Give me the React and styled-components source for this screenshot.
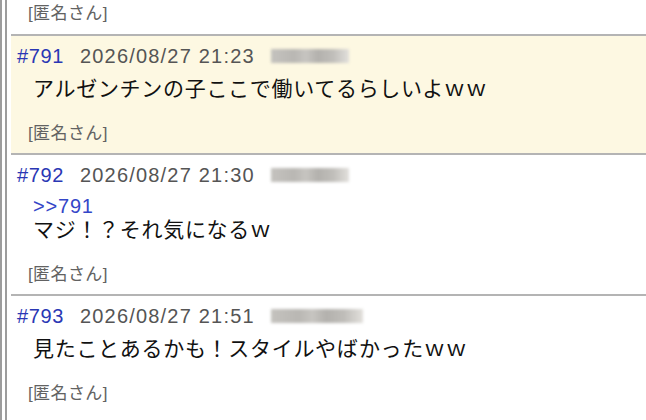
import React from "react";
import styled, { createGlobalStyle } from "styled-components";

const GlobalStyle = createGlobalStyle`
  html, body {
    margin: 0;
    padding: 0;
    background: #ffffff;
  }
  body {
    font-family: "Liberation Sans", "Noto Sans CJK JP", sans-serif;
  }
`;

const Frame = styled.div`
  min-height: 100vh;
  border-left: 7px double #9c9c9c;
  padding-left: 4px;
  box-sizing: border-box;
`;

const Post = styled.div`
  border-top: ${(p) => (p.$partial ? "none" : "2px solid #b4b4b4")};
  background: ${(p) => (p.$highlight ? "#fdf8e2" : "#ffffff")};
  padding: ${(p) => (p.$partial ? "2px 0 8px" : "8px 0 7px")};
`;

const Header = styled.div`
  display: flex;
  align-items: center;
  gap: 16px;
  padding-left: 6px;
  height: 24px;
  font-family: "Liberation Sans", sans-serif;
  font-size: 20px;
`;

const Num = styled.span`
  color: #2a37b4;
  letter-spacing: 0.6px;
`;

const Date = styled.span`
  color: #555555;
  letter-spacing: 1.2px;
`;

const BlurId = styled.span`
  display: inline-block;
  width: ${(p) => p.$w}px;
  height: 14px;
  background: linear-gradient(
    90deg,
    #c4c2be 0%,
    #b9b7b3 30%,
    #c7c5c1 45%,
    #b3b1ad 60%,
    #c0beba 80%,
    #e2e0dc 100%
  );
  filter: blur(1.5px);
`;

const Body = styled.div`
  margin-top: 8px;
  padding-left: 22px;
  font-size: 21px;
  line-height: 26px;
  letter-spacing: 0.7px;
  color: #111111;
`;

const Quote = styled.div`
  color: #3446c8;
  font-family: "Liberation Sans", sans-serif;
  font-size: 20px;
  line-height: 22px;
  letter-spacing: 0.8px;
`;

const Footer = styled.div`
  margin-top: ${(p) => (p.$partial ? "0" : "20px")};
  padding-left: 17px;
  font-size: 17px;
  line-height: 24px;
  letter-spacing: 0.4px;
  color: #626262;
`;

const posts = [
  {
    no: 791,
    date: "2026/08/27 21:23",
    idWidth: 78,
    text: "アルゼンチンの子ここで働いてるらしいよｗｗ",
    highlight: true,
  },
  {
    no: 792,
    date: "2026/08/27 21:30",
    idWidth: 78,
    quote: ">>791",
    text: "マジ！？それ気になるｗ",
  },
  {
    no: 793,
    date: "2026/08/27 21:51",
    idWidth: 92,
    text: "見たことあるかも！スタイルやばかったｗｗ",
  },
];

export default function App() {
  return (
    <>
      <GlobalStyle />
      <Frame>
        <Post $partial>
          <Footer $partial>[匿名さん]</Footer>
        </Post>
        {posts.map((p) => (
          <Post key={p.no} $highlight={p.highlight}>
            <Header>
              <Num>#{p.no}</Num>
              <Date>{p.date}</Date>
              <BlurId $w={p.idWidth} />
            </Header>
            <Body>
              {p.quote && <Quote>{p.quote}</Quote>}
              <div>{p.text}</div>
            </Body>
            <Footer>[匿名さん]</Footer>
          </Post>
        ))}
      </Frame>
    </>
  );
}
